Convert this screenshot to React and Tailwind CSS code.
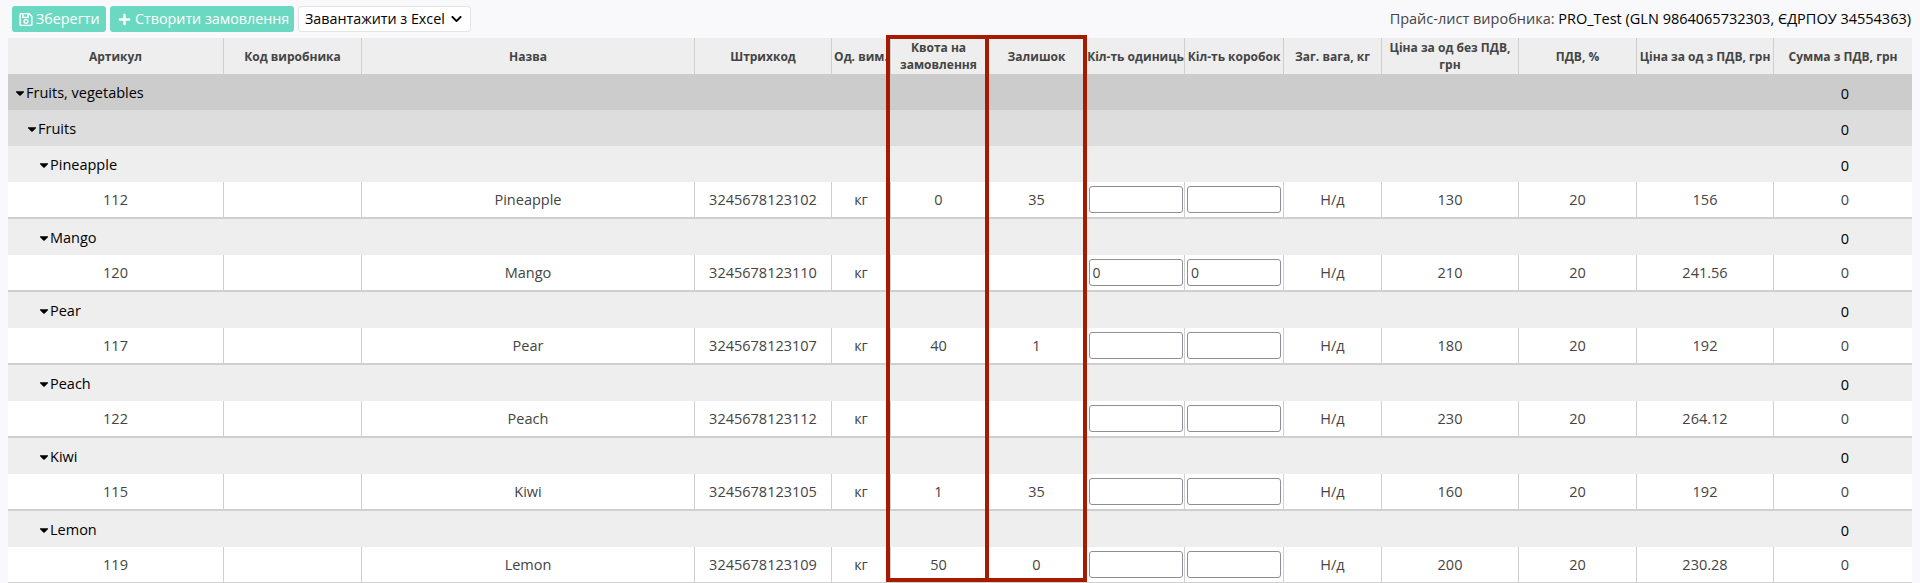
import { FaRegSave, FaPlus, FaChevronDown, FaCaretDown } from 'react-icons/fa'

const rows = [
  { group: 'Pineapple', sku: '112', code: '3245678123102', quota: '0', left: '35', price: '130', gross: '156' },
  { group: 'Mango', sku: '120', code: '3245678123110', quota: '', left: '', price: '210', gross: '241.56', qty: '0' },
  { group: 'Pear', sku: '117', code: '3245678123107', quota: '40', left: '1', price: '180', gross: '192' },
  { group: 'Peach', sku: '122', code: '3245678123112', quota: '', left: '', price: '230', gross: '264.12' },
  { group: 'Kiwi', sku: '115', code: '3245678123105', quota: '1', left: '35', price: '160', gross: '192' },
  { group: 'Lemon', sku: '119', code: '3245678123109', quota: '50', left: '0', price: '200', gross: '230.28' },
]

const headers = [
  'Артикул',
  'Код виробника',
  'Назва',
  'Штрихкод',
  'Од. вим.',
  'Квота на замовлення',
  'Залишок',
  'Кіл-ть одиниць',
  'Кіл-ть коробок',
  'Заг. вага, кг',
  'Ціна за од без ПДВ, грн',
  'ПДВ, %',
  'Ціна за од з ПДВ, грн',
  'Сумма з ПДВ, грн',
]

const widths = [
  'w-[216px]',
  'w-[138px]',
  'w-[333px]',
  'w-[137px]',
  'w-[59px]',
  'w-[96px]',
  'w-[100px]',
  'w-[98px]',
  'w-[99px]',
  'w-[98px]',
  'w-[137px]',
  'w-[118px]',
  'w-[137px]',
  'w-[138px]',
]

function GroupRow({ name, level, bg }) {
  const pad = ['pl-[5px]', 'pl-[17px]', 'pl-[29px]'][level]
  return (
    <tr className={`h-[36px] ${bg}`}>
      <td colSpan={13} className={`${pad} pt-[3px] text-black`}>
        <span className="inline-flex items-center">
          <FaCaretDown className="w-[14px] h-[14px] -mr-[1px] text-black" />
          {name}
        </span>
      </td>
      <td className="text-center text-black pl-[4px] pt-[3px]">0</td>
    </tr>
  )
}

function Cell({ children }) {
  return <td className="text-center border-r border-b-2 border-[#cfcfcf] p-0">{children}</td>
}

function QtyInput({ value }) {
  return (
    <input
      defaultValue={value}
      className="block mx-auto w-[94px] h-[27px] bg-white border border-[#8f8d9b] rounded-[3px] px-[3px] text-[14px] text-[#444]"
    />
  )
}

function DataRow({ row }) {
  return (
    <tr className="h-[37px] bg-white text-[#444]">
      <Cell>{row.sku}</Cell>
      <Cell></Cell>
      <Cell>{row.group}</Cell>
      <Cell>{row.code}</Cell>
      <Cell>кг</Cell>
      <Cell>{row.quota}</Cell>
      <Cell>{row.left}</Cell>
      <Cell><QtyInput value={row.qty} /></Cell>
      <Cell><QtyInput value={row.qty} /></Cell>
      <Cell>Н/д</Cell>
      <Cell>{row.price}</Cell>
      <Cell>20</Cell>
      <Cell>{row.gross}</Cell>
      <td className="text-center border-b-2 border-[#cfcfcf] pl-[4px]">0</td>
    </tr>
  )
}

export default function App() {
  return (
    <div className="relative h-[583px] overflow-hidden bg-[#f9f9fb] font-['Open_Sans',sans-serif] text-[14.5px] text-[#444]">
      {/* Toolbar */}
      <div className="flex items-center justify-between h-[38px] pl-[12px] pr-[9px]">
        <div className="flex gap-[4px] text-[14.3px]">
          <button className="flex items-center gap-[3px] h-[26px] w-[94px] pl-[7px] rounded-[3px] bg-[#6bd9c2] text-white">
            <FaRegSave className="w-[14px] h-[15px]" />
            Зберегти
          </button>
          <button className="flex items-center gap-[4px] h-[26px] w-[184px] pl-[8px] rounded-[3px] bg-[#6bd9c2] text-white">
            <FaPlus className="w-[13px] h-[13px] shrink-0" />
            Створити замовлення
          </button>
          <button className="flex items-center gap-[5px] h-[26px] w-[173px] pl-[6px] rounded-[3px] bg-white border border-[#e4e4e8] text-black">
            Завантажити з Excel
            <FaChevronDown className="w-[13px] h-[12px]" />
          </button>
        </div>
        <div>
          Прайс-лист виробника: <span className="text-black">PRO_Test (GLN 9864065732303, ЄДРПОУ 34554363)</span>
        </div>
      </div>

      {/* Table */}
      <div className="pl-[8px] pr-[8px]">
        <table className="table-fixed w-[1904px] border-separate border-spacing-0">
          <colgroup>
            {widths.map((w, i) => (
              <col key={i} className={w} />
            ))}
          </colgroup>
          <thead>
            <tr className="h-[36px] bg-[#eeeeee]">
              {headers.map((h, i) => (
                <th
                  key={h}
                  className={`p-0 text-center text-[12px] leading-[17px] font-bold text-[#444] ${i < 13 ? 'border-r border-[#cfcfcf]' : ''} ${i === 4 || i === 7 || i === 8 ? 'whitespace-nowrap' : ''}`}
                >
                  {h}
                </th>
              ))}
            </tr>
          </thead>
          <tbody>
            <GroupRow name="Fruits, vegetables" level={0} bg="bg-[#cccccc]" />
            <GroupRow name="Fruits" level={1} bg="bg-[#dddddd]" />
            {rows.map((row) => (
              <>
                <GroupRow key={row.group} name={row.group} level={2} bg="bg-[#eeeeee]" />
                <DataRow key={row.sku} row={row} />
              </>
            ))}
          </tbody>
        </table>
      </div>

      {/* Red highlight boxes over the quota and stock columns */}
      <div className="absolute left-[886px] top-[35px] w-[103px] h-[547px] border-4 border-[#a61b00]"></div>
      <div className="absolute left-[985px] top-[35px] w-[102px] h-[547px] border-4 border-[#a61b00]"></div>
    </div>
  )
}
